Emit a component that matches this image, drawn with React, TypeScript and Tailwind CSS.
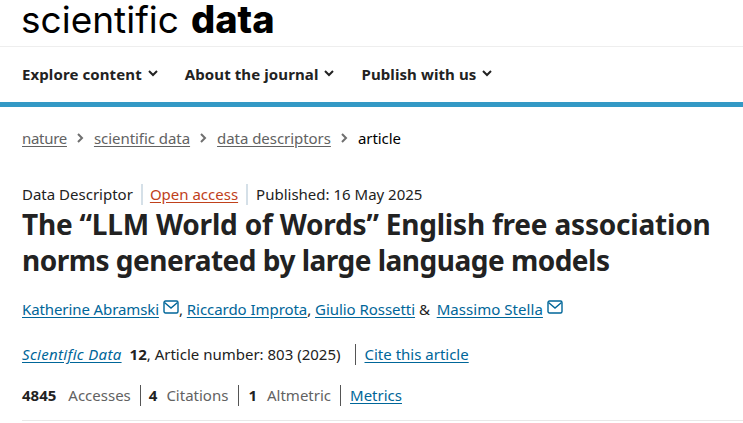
import React from "react";

const font = { fontFamily: '"Noto Sans", sans-serif' };

function Chevron() {
  return (
    <svg width="10" height="7" viewBox="0 0 10 7" className="ml-[6px] mt-[-1px]" fill="none" stroke="#222222" strokeWidth="2">
      <path d="M1 1l4 4 4-4" />
    </svg>
  );
}

function Sep() {
  return (
    <svg width="7" height="10" viewBox="0 0 7 10" className="mx-[10px]" fill="none" stroke="#6f6f6f" strokeWidth="2">
      <path d="M1 1l4 4-4 4" />
    </svg>
  );
}

function Mail() {
  return (
    <svg width="16" height="14" viewBox="0 0 16 14" className="ml-[4px] mb-[5px]" fill="none" stroke="#006699" strokeWidth="1.4">
      <rect x="1" y="1" width="14" height="12" rx="1.5" />
      <path d="M1.5 2.5L8 8l6.5-5.5" />
    </svg>
  );
}

const link = "text-[#006699] underline underline-offset-2";

export default function App() {
  return (
    <div className="w-[743px] h-[423px] overflow-hidden bg-white text-[#222222] font-['Noto_Sans']" style={font}>
      <div className="h-[47px] border-b border-[#eeeeee] pl-[21px]">
        <div className="flex text-[37px] leading-[39px] tracking-[0px] text-black font-['Inter']">
          <span>scientific</span>
          <span className="ml-[12px] text-[38px] font-extrabold tracking-[0px]">data</span>
        </div>
      </div>
      <div className="h-[55px] flex items-center pl-[22px] pb-[1px] text-[15px] font-bold tracking-[0.1px]">
        <span>Explore content</span>
        <Chevron />
        <span className="ml-[27px]">About the journal</span>
        <Chevron />
        <span className="ml-[27px]">Publish with us</span>
        <Chevron />
      </div>
      <div className="h-[5px] bg-[#3399c5]" />
      <div className="mt-[21px] h-[20px] flex items-center pl-[22px] text-[15px] leading-[20px] tracking-[-0.05px]">
        <span className="text-[#626262] underline underline-offset-2 tracking-[-0.3px]">nature</span>
        <Sep />
        <span className="text-[#626262] underline underline-offset-2">scientific data</span>
        <Sep />
        <span className="text-[#626262] underline underline-offset-2">data descriptors</span>
        <Sep />
        <span className="text-black">article</span>
      </div>
      <div className="mt-[35px] h-[22px] flex items-center pl-[22px] text-[15px] leading-[20px]">
        <span>Data Descriptor</span>
        <span className="ml-[8px] mr-[7px] w-[2px] h-[21px] bg-[#d5e0e8]" />
        <span className="text-[#c0411b] underline underline-offset-2">Open access</span>
        <span className="mx-[8px] w-[2px] h-[21px] bg-[#d5e0e8]" />
        <span>Published: 16 May 2025</span>
      </div>
      <h1 className="mt-[1px] pl-[22px] text-[28px] leading-[36px] font-bold tracking-[-0.2px]">
        The “LLM World of Words” English free association
        <br />
        <span className="tracking-[-0.5px]">norms generated by large language models</span>
      </h1>
      <div className="mt-[17px] flex items-end h-[24px] pl-[22px] text-[15px] leading-[20px] tracking-[-0.05px]">
        <span className={`${link} tracking-[-0.1px]`}>Katherine Abramski</span>
        <Mail />
        <span>,&nbsp;</span>
        <span className={link}>Riccardo Improta</span>
        <span>,&nbsp;</span>
        <span className={link}>Giulio Rossetti</span>
        <span>&nbsp;&amp;&nbsp;</span>
        <span className={`${link} ml-[3px] tracking-[0.05px]`}>Massimo Stella</span>
        <Mail />
      </div>
      <div className="mt-[24px] flex items-center h-[22px] pl-[22px] text-[15px] leading-[20px]">
        <span className={`${link} italic tracking-[0.33px]`}>Scientific Data</span>
        <span className="ml-[8px] font-bold">12</span>
        <span>, Article number: 803 (2025)</span>
        <span className="ml-[14px] mr-[9px] w-px h-[21px] bg-[#555555]" />
        <span className={link}>Cite this article</span>
      </div>
      <div className="mt-[19px] flex items-center h-[22px] pl-[22px] text-[15px] leading-[20px]">
        <span className="font-bold">4845</span>
        <span className="ml-[12px] text-[#626262]">Accesses</span>
        <span className="ml-[9px] mr-[8px] w-px h-[21px] bg-[#555555]" />
        <span className="font-bold">4</span>
        <span className="ml-[9px] text-[#626262]">Citations</span>
        <span className="ml-[10px] mr-[9px] w-px h-[21px] bg-[#555555]" />
        <span className="font-bold">1</span>
        <span className="ml-[10px] text-[#626262]">Altmetric</span>
        <span className="mx-[9px] w-px h-[21px] bg-[#555555]" />
        <span className={link}>Metrics</span>
      </div>
      <div className="mt-[14px] ml-[22px] border-t border-[#e8e8e8]" />
    </div>
  );
}
